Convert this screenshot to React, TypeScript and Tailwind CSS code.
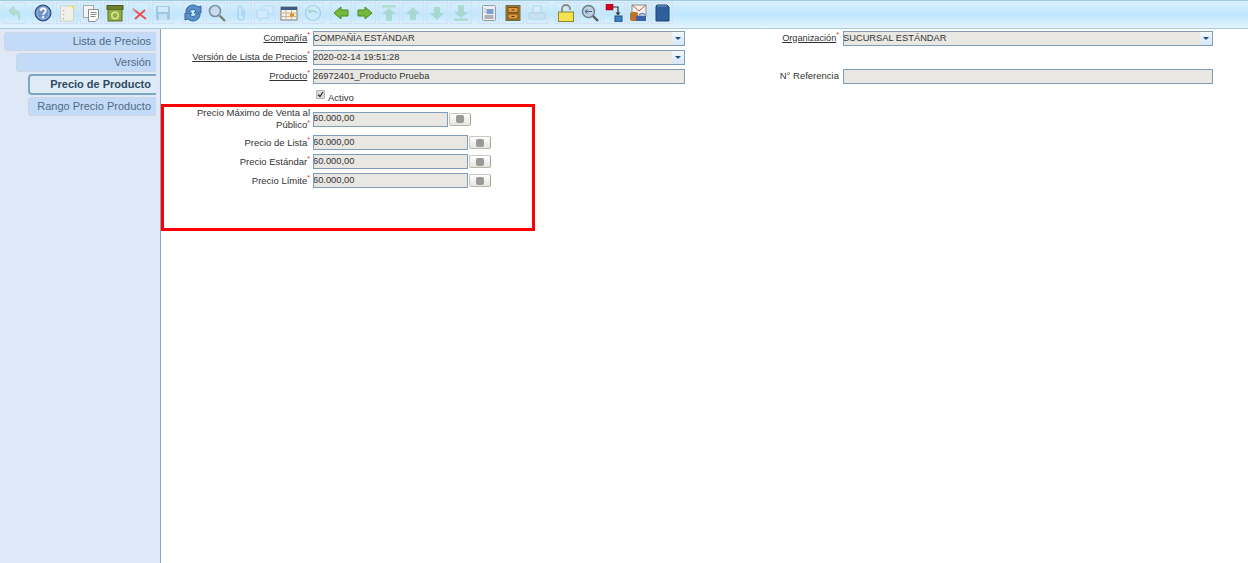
import type { ReactNode } from 'react';

const font = { fontFamily: '"Liberation Sans", Arial, sans-serif' };

/* Iconos de la barra: dibujados a mano sobre una caja de 18x18 */
const icons: Record<string, ReactNode> = {
  undo: <path d="M8 2 3 7l5 5V9c3 0 5 2 5 7 2-6 0-10-5-10z" fill="#8fbf6a" stroke="#7aa85a" />,
  help: (
    <>
      <circle cx="9" cy="9" r="8" fill="#4a70ad" stroke="#2a4a80" />
      <circle cx="9" cy="9" r="6.2" fill="#6d92c6" stroke="#dfe8f4" strokeWidth=".6" />
      <path d="M6.500 7c.2-3.400 5.200-3.200 5.200-.2 0 2-2.400 2-2.600 4" fill="none" stroke="#fff" strokeWidth="1.800" />
      <rect x="8.100" y="12.200" width="2" height="2" fill="#fff" />
    </>
  ),
  newDoc: (
    <>
      <rect x="2.500" y="2" width="13" height="15" fill="#f1f1e9" stroke="#d2d2c6" />
      <path d="M12 1.500h4.500V6z" fill="#f2dc62" />
      <rect x="5" y="6" width="1.200" height="1.200" fill="#aaa" />
      <rect x="5" y="10" width="1.200" height="1.200" fill="#aaa" />
      <rect x="5" y="14" width="1.200" height="1.200" fill="#aaa" />
    </>
  ),
  copy: (
    <>
      <rect x="1.500" y="1.500" width="10" height="12" fill="#f4f4f4" stroke="#a8a8a8" />
      <path d="M6.500 5.500h10v9l-3 3h-7z" fill="#fff" stroke="#8c8c8c" />
      <path d="M8.500 8.500h6M8.500 10.500h6M8.500 12.500h5" stroke="#8a8a8a" />
      <path d="M13.500 17.500v-3h3z" fill="#c9c9c9" />
    </>
  ),
  trash: (
    <>
      <rect x="1" y="1.500" width="16" height="4" fill="#6d7f2f" stroke="#4c5a20" />
      <rect x="2" y="5.500" width="14" height="11.500" fill="#94ad3f" stroke="#5c6d26" />
      <circle cx="9" cy="11.500" r="3.200" fill="none" stroke="#d5e59a" strokeWidth="1.500" />
    </>
  ),
  del: (
    <>
      <path d="M3 5 16 15M15 6 5 15" stroke="#f04a4a" strokeWidth="1.800" />
      <path d="M2 6h4M2 8h3" stroke="#c5d5e5" />
    </>
  ),
  save: (
    <>
      <rect x="2" y="2" width="14" height="14" rx="1" fill="#4f7ea8" />
      <rect x="4" y="3" width="10" height="5" fill="#e8eef3" />
      <rect x="5" y="10" width="8" height="6" fill="#c7d4de" />
    </>
  ),
  refresh: (
    <>
      <path d="M2 8c0-4 3-7 7-7 2 0 4 1 5 2l3-1v7h-7l2-2c-1-1-2-1.500-3-1.500C7 5.500 6 7 6 8z" fill="#5a8fc8" stroke="#34659e" />
      <path d="M16 10c0 4-3 7-7 7-2 0-4-1-5-2l-3 1V9h7l-2 2c1 1 2 1.500 3 1.500 2 0 3-1.500 3-2.500z" fill="#5a8fc8" stroke="#34659e" />
    </>
  ),
  search: (
    <>
      <circle cx="7" cy="7" r="5.500" fill="#c8dcee" stroke="#7d8e9f" strokeWidth="1.600" />
      <path d="m11.500 11.500 5.500 5.500" stroke="#7a7f70" strokeWidth="2.400" />
    </>
  ),
  clip: <path d="M12 5v8a3 3 0 0 1-6 0V4a2 2 0 0 1 4 0v8" fill="none" stroke="#6f9fd0" strokeWidth="1.500" />,
  chat: (
    <>
      <rect x="6" y="2" width="11" height="8" fill="#eaf4fb" stroke="#8fb0c8" />
      <path d="M1 6h11v8H6l-2 3v-3H1z" fill="#eaf4fb" stroke="#8fb0c8" />
    </>
  ),
  grid: (
    <>
      <rect x="1" y="3" width="16" height="13" fill="#f8f1df" stroke="#7c7c7c" />
      <rect x="1" y="3" width="16" height="3" fill="#3e5c85" />
      <path d="M1 9h16M1 12.500h16M6 6v10M11.500 6v10" stroke="#c2b69e" />
      <rect x="10" y="9.500" width="4" height="3" fill="#ee8a24" />
    </>
  ),
  history: (
    <>
      <circle cx="9" cy="9" r="7.500" fill="#d9eef8" stroke="#6aa0b5" strokeWidth="1.500" />
      <path d="M5 9c1-3 6-3 8 0" fill="none" stroke="#5f9c66" strokeWidth="1.500" />
      <path d="m4 5 1 4 4-1z" fill="#5f9c66" />
    </>
  ),
  prev: <path d="M2 9 9 3v3h7v6H9v3z" fill="#76b83a" stroke="#4d8a1e" />,
  next: <path d="M16 9 9 3v3H2v6h7v3z" fill="#76b83a" stroke="#4d8a1e" />,
  first: (
    <>
      <rect x="2" y="1" width="14" height="2.500" fill="#6cb36a" />
      <path d="m9 4 7 6h-4v7H6v-7H2z" fill="#6cb36a" />
    </>
  ),
  up: <path d="m9 3 7 7h-4v6H6v-6H2z" fill="#6cb36a" />,
  down: <path d="m9 16 7-7h-4V3H6v6H2z" fill="#6cb36a" />,
  last: (
    <>
      <rect x="2" y="14.500" width="14" height="2.500" fill="#6cb36a" />
      <path d="m9 14 7-6h-4V1H6v7H2z" fill="#6cb36a" />
    </>
  ),
  report: (
    <>
      <rect x="2.500" y="1.500" width="13" height="15" rx="1" fill="#eceff2" stroke="#9a9da0" />
      <rect x="6.500" y="5" width="7" height="5" fill="#7da3cc" />
      <path d="M4.500 5h1M4.500 8h1M4.500 12h9M4.500 14h9" stroke="#70757a" />
    </>
  ),
  archive: (
    <>
      <rect x="2" y="1.500" width="14" height="15" fill="#a87a2c" stroke="#6f6a3f" />
      <rect x="4" y="3.500" width="10" height="5" fill="#e09a3c" stroke="#70501a" />
      <rect x="4" y="10" width="10" height="5" fill="#e09a3c" stroke="#70501a" />
      <path d="M7.500 6h3M7.500 12.500h3" stroke="#5c3d10" />
    </>
  ),
  print: (
    <>
      <rect x="5" y="2" width="8" height="7" fill="#f2f6f9" stroke="#8ea0ae" />
      <path d="M1 9h16v6H1z" fill="#c9d6df" stroke="#8ea0ae" />
    </>
  ),
  lock: (
    <>
      <path d="M5 9V5a4 4 0 0 1 8 0v1" fill="none" stroke="#8b8b80" strokeWidth="1.800" />
      <rect x="1.500" y="8" width="15" height="9.500" fill="#f4e24e" stroke="#8c8430" />
    </>
  ),
  zoomAcross: (
    <>
      <circle cx="7.500" cy="7.500" r="6" fill="#bfcfdd" stroke="#717f8b" strokeWidth="1.500" />
      <path d="m12 12 5 5" stroke="#55595c" strokeWidth="2.400" />
      <path d="M4 7.500h7M4 7.500l2.500-2M4 7.500l2.500 2" stroke="#47688c" fill="none" />
    </>
  ),
  workflow: (
    <>
      <rect x="1" y="0" width="7" height="6" fill="#d8001c" stroke="#8a0012" strokeWidth=".5" />
      <path d="M8 3h5v6" fill="none" stroke="#333" strokeWidth="1.200" />
      <path d="m10.500 8.500 2.500 3 2.500-3z" fill="#333" />
      <rect x="10" y="12" width="7" height="6" fill="#3f80c0" stroke="#1f4f86" />
    </>
  ),
  mail: (
    <>
      <rect x="3" y="1" width="14" height="11" fill="#f7f3ea" stroke="#8a8a8a" />
      <path d="m3 1 7 6 7-6" fill="none" stroke="#b55" />
      <rect x="1" y="8" width="8" height="9" rx="2" fill="#b8742a" />
      <path d="M7 12h10v5H7z" fill="#3f5fa8" />
      <path d="M10 11c2-2 5-2 6 0" fill="none" stroke="#5a86d0" strokeWidth="1.500" />
    </>
  ),
  blue: (
    <>
      <path d="M4 1h10l2 2v14H3V2z" fill="#2f5f9c" stroke="#1f4272" />
      <path d="M4 2h10" stroke="#6f96c8" />
    </>
  ),
};

const toolbar: { icon: string; off?: boolean; gap?: number; wide?: boolean }[] = [
  { icon: 'undo', off: true, wide: true },
  { icon: 'help', gap: 6 },
  { icon: 'newDoc' },
  { icon: 'copy' },
  { icon: 'trash' },
  { icon: 'del' },
  { icon: 'save', off: true },
  { icon: 'refresh', gap: 8 },
  { icon: 'search' },
  { icon: 'clip', off: true },
  { icon: 'chat', off: true },
  { icon: 'grid' },
  { icon: 'history', off: true },
  { icon: 'prev', gap: 6 },
  { icon: 'next' },
  { icon: 'first', off: true },
  { icon: 'up', off: true },
  { icon: 'down', off: true },
  { icon: 'last', off: true },
  { icon: 'report', gap: 6 },
  { icon: 'archive' },
  { icon: 'print', off: true },
  { icon: 'lock', gap: 7 },
  { icon: 'zoomAcross' },
  { icon: 'workflow' },
  { icon: 'mail' },
  { icon: 'blue' },
];

const Toolbar = () => (
  <div className="flex h-[29px] items-start border-t border-b border-t-[#9fcbde] border-b-[#a9cdda] bg-gradient-to-b from-[#d9f1fc] via-[#bfe7fd] to-[#e2f4fe] pl-[3px] pt-[1px]">
    {toolbar.map((b) => (
      <div
        key={b.icon}
        className={`flex h-[22px] shrink-0 items-center justify-center border border-[#d5def2] ${b.wide ? 'w-[23px]' : 'w-[22px]'} ${b.gap === 6 ? 'ml-[6px]' : b.gap === 7 ? 'ml-[7px]' : b.gap === 8 ? 'ml-[8px]' : 'ml-[2px] first:ml-0'}`}
      >
        <svg width="18" height="18" viewBox="0 0 18 18" className={b.off ? 'opacity-30' : ''}>
          {icons[b.icon]}
        </svg>
      </div>
    ))}
  </div>
);

const tabs = [
  { label: 'Lista de Precios', cls: 'ml-[4px] h-[19px] mt-[3px]' },
  { label: 'Versión', cls: 'ml-[16px] h-[19px] mt-[2px]' },
  { label: 'Precio de Producto', cls: 'ml-[28px] h-[21px] mt-[2px]', active: true },
  { label: 'Rango Precio Producto', cls: 'ml-[28px] h-[19px] mt-[2px]' },
];

const Sidebar = () => (
  <div className="w-[161px] shrink-0 self-stretch border-r border-[#7ea9c6] bg-[#dfe8f6] pr-[4px]">
    {tabs.map((t) => (
      <div
        key={t.label}
        className={`${t.cls} flex items-center justify-end rounded-l-[4px] pr-[5px] text-[11px] ${
          t.active
            ? 'border-2 border-r-0 border-[#7ea7c4] bg-[#dfebf7] font-bold text-[#2f4a5f]'
            : 'border border-r-0 border-[#ccd5e2] bg-[#c3daf9] text-[#506a80]'
        }`}
      >
        {t.label}
      </div>
    ))}
  </div>
);

const Req = () => <sup className="text-[7px] leading-none text-[#e03030]">*</sup>;

const Label = ({ children, link, req, className = '' }: { children: ReactNode; link?: boolean; req?: boolean; className?: string }) => (
  <div className={`text-right leading-[12px] text-[#333] ${className}`}>
    <span className={link ? 'underline' : ''}>{children}</span>
    {req && <Req />}
  </div>
);

const Field = ({ value = '', className = 'w-[372px]', select }: { value?: string; className?: string; select?: boolean }) => (
  <div className={`relative flex h-[15px] items-center overflow-hidden border border-[#7f9db9] bg-[#e9e7e2] text-[9.300px] leading-none text-[#333] ${className}`}>
    <span className="-ml-[1px]">{value}</span>
    {select && (
      <div className="absolute inset-y-0 right-0 flex w-[12px] items-center justify-center bg-gradient-to-b from-[#f4f8fc] to-[#d6e6f5]">
        <div className="h-0 w-0 border-x-[3px] border-t-[3px] border-x-transparent border-t-[#1f4f86]" />
      </div>
    )}
  </div>
);

const CalcButton = () => (
  <div className="flex h-[13px] w-[22px] items-center justify-center rounded-[2px] border border-[#c8c8c0] border-r-[#a8a690] border-b-[#b8b6a4] bg-gradient-to-b from-white to-[#e4e4e0]">
    <div className="h-[8px] w-[8px] rounded-[2px] bg-[#999]" />
  </div>
);

const PriceRow = ({ label }: { label: string }) => (
  <div className="flex h-[15px] items-center">
    <Label req className="w-[152px] shrink-0 pr-[3px] text-[9.500px]">
      {label}
    </Label>
    <Field value="60.000,00" className="w-[155px]" />
    <div className="ml-[1px]">
      <CalcButton />
    </div>
  </div>
);

const Form = () => (
  <div className="relative flex-1 self-stretch bg-white pt-[2px]">
    <div className="flex flex-col gap-[4px]">
      <div className="flex items-center">
        <Label link req className="w-[152px] shrink-0 pb-[2px] pr-[3px] text-[9.500px]">Compañía</Label>
        <Field value="COMPAÑÍA ESTÁNDAR" select />
        <Label link req className="ml-[94px] w-[61px] shrink-0 whitespace-nowrap pb-[2px] pr-[1px] text-[9.200px]">Organización</Label>
        <Field value="SUCURSAL ESTÁNDAR" select className="ml-[3px] w-[370px]" />
      </div>
      <div className="flex items-center">
        <Label link req className="w-[152px] shrink-0 whitespace-nowrap pb-[2px] pr-[3px] text-[9.500px]">Versión de Lista de Precios</Label>
        <Field value="2020-02-14 19:51:28" select />
      </div>
      <div className="flex items-center">
        <Label link req className="w-[152px] shrink-0 pb-[2px] pr-[3px] text-[9.500px]">Producto</Label>
        <Field value="26972401_Producto Prueba" />
        <Label className="ml-[84px] w-[71px] shrink-0 whitespace-nowrap pb-[2px] pr-[1px] text-[9.500px]">N° Referencia</Label>
        <Field className="ml-[3px] w-[370px]" />
      </div>
    </div>
    <div className="ml-[155px] mt-[6px] flex h-[14px] items-start gap-[3px] text-[9.500px] text-[#333]">
      <span className="flex h-[9px] w-[9px] items-center justify-center rounded-[1px] border border-[#b5b5b5] bg-[#dcdcdc]">
        <svg width="7" height="7" viewBox="0 0 7 7">
          <path d="m1 3.500 2 2 3-4.500" fill="none" stroke="#333" strokeWidth="1.300" />
        </svg>
      </span>
      <span className="mt-[1px] leading-[13px]">Activo</span>
    </div>
    <div className="mt-[3px] flex flex-col gap-[4px]">
      <div className="flex items-center">
        <div className="w-[152px] shrink-0 pr-[3px] text-right text-[9.500px] leading-[12px] text-[#333]">
          Precio Máximo de Venta al
          <br />
          Público
          <Req />
        </div>
        <Field value="60.000,00" className="w-[135px]" />
        <div className="ml-[1px]">
          <CalcButton />
        </div>
      </div>
      <PriceRow label="Precio de Lista" />
      <PriceRow label="Precio Estándar" />
      <PriceRow label="Precio Límite" />
    </div>
    {/* Recuadro rojo de anotacion sobre el formulario */}
    <div className="absolute left-0 top-[75px] h-[127px] w-[374px] border-[3px] border-[#ff0000]" />
  </div>
);

export default function App() {
  return (
    <div className="flex h-[563px] w-[1248px] flex-col overflow-hidden bg-white" style={font}>
      <Toolbar />
      <div className="flex flex-1">
        <Sidebar />
        <Form />
      </div>
    </div>
  );
}
